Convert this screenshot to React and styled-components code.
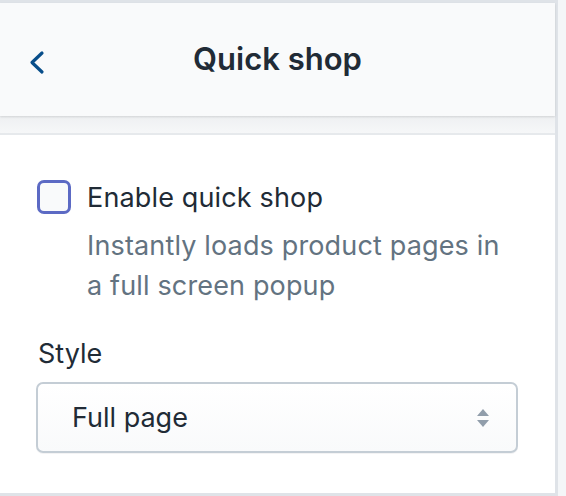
import { createGlobalStyle } from 'styled-components';
import styled from 'styled-components';

const GlobalStyle = createGlobalStyle`
  html, body {
    margin: 0;
    padding: 0;
    background: #ffffff;
  }
  body {
    font-family: Inter, "Noto Sans", "Liberation Sans", sans-serif;
    -webkit-font-smoothing: antialiased;
  }
`;

const Page = styled.div`
  display: flex;
  width: 566px;
  height: 496px;
  overflow: hidden;
  background: #f4f6f8;
`;

const Sidebar = styled.div`
  display: flex;
  flex-direction: column;
  width: 555px;
  flex-shrink: 0;
  border-top: 3px solid #dfe3e8;
  border-bottom: 3px solid #dfe3e8;
  border-right: 3px solid #dfe3e8;
  background: #ffffff;
`;

const Header = styled.header`
  position: relative;
  display: flex;
  align-items: center;
  justify-content: center;
  height: 113px;
  background: #f9fafb;
  box-shadow: 0 1px 2px rgba(0, 0, 0, 0.12);
  z-index: 1;
`;

const BackButton = styled.button`
  position: absolute;
  left: 28px;
  top: 47px;
  display: flex;
  padding: 0;
  border: none;
  background: transparent;
  cursor: pointer;
`;

const Title = styled.h1`
  margin: 0 0 2px;
  font-size: 31px;
  font-weight: 600;
  color: #212b36;
`;

const Gap = styled.div`
  height: 17px;
  background: linear-gradient(#eef0f2, #f6f7f8);
  border-bottom: 2px solid #e6e9ec;
`;

const Section = styled.section`
  flex: 1;
  display: flex;
  flex-direction: column;
  padding: 46px 37px 0 36px;
`;

const CheckRow = styled.label`
  display: flex;
  align-items: flex-start;
  gap: 16px;
  cursor: pointer;
`;

const Box = styled.span`
  box-sizing: border-box;
  flex-shrink: 0;
  width: 34px;
  height: 34px;
  margin: -1px 0 0 1px;
  border: 3px solid #5c6ac4;
  border-radius: 7px;
  background: #f9fafb;
`;

const CheckText = styled.div`
  display: flex;
  flex-direction: column;
`;

const CheckLabel = styled.span`
  font-size: 27px;
  line-height: 34px;
  letter-spacing: 0.15px;
  color: #212b36;
`;

const Help = styled.p`
  margin: 11px 0 0;
  font-size: 27px;
  line-height: 40px;
  letter-spacing: 0.15px;
  color: #637381;
`;

const FieldLabel = styled.div`
  margin-top: 31px;
  margin-left: 2px;
  font-size: 27px;
  line-height: 34px;
  color: #212b36;
`;

const Select = styled.div`
  box-sizing: border-box;
  display: flex;
  align-items: center;
  justify-content: space-between;
  margin-top: 11px;
  height: 71px;
  flex-shrink: 0;
  padding: 0 26px 0 34px;
  border: 2px solid #c4cdd5;
  border-radius: 7px;
  background: linear-gradient(#ffffff, #f9fafb);
  box-shadow: 0 1px 0 rgba(22, 29, 37, 0.05);
  font-size: 27px;
  color: #212b36;
`;

const Arrows = () => (
  <svg width="14" height="22" viewBox="0 0 14 22" aria-hidden="true">
    <path d="M7 2 L13 9 H1 Z" fill="#919eab" />
    <path d="M1 13 H13 L7 20 Z" fill="#919eab" />
  </svg>
);

const Chevron = () => (
  <svg width="19" height="25" viewBox="0 0 19 25" aria-hidden="true">
    <path
      d="M14 3 L4 12.5 L14 22"
      fill="none"
      stroke="#084e8a"
      strokeWidth="3.2"
      strokeLinecap="round"
      strokeLinejoin="round"
    />
  </svg>
);

export default function App() {
  return (
    <>
      <GlobalStyle />
      <Page>
        <Sidebar>
          <Header>
            <BackButton aria-label="Back">
              <Chevron />
            </BackButton>
            <Title>Quick shop</Title>
          </Header>
          <Gap />
          <Section>
            <CheckRow>
              <Box />
              <CheckText>
                <CheckLabel>Enable quick shop</CheckLabel>
                <Help>
                  Instantly loads product pages in
                  <br />a full screen popup
                </Help>
              </CheckText>
            </CheckRow>
            <FieldLabel>Style</FieldLabel>
            <Select>
              <span>Full page</span>
              <Arrows />
            </Select>
          </Section>
        </Sidebar>
      </Page>
    </>
  );
}
